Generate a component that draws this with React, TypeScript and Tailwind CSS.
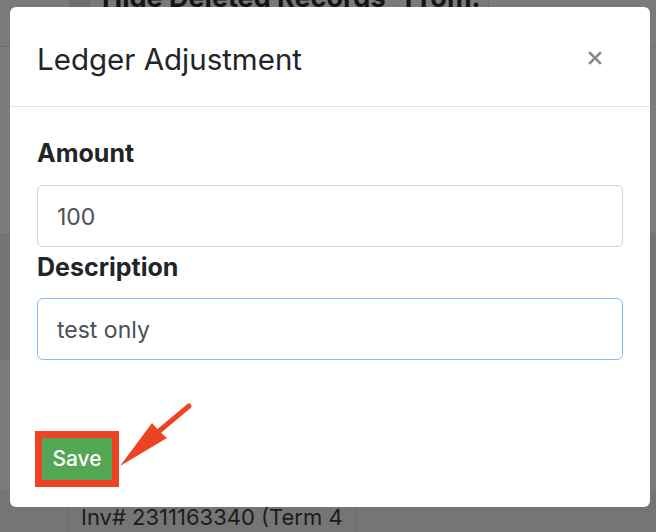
import React from "react";

const font = { fontFamily: "Inter, 'Liberation Sans', sans-serif" };

function Backdrop() {
  return (
    <div className="flex flex-col w-full h-full bg-[#7b7b7b]" style={font}>
      {/* table header row, mostly hidden behind the modal */}
      <div className="h-[47px] border-b border-[#6f6f6f] bg-[#7a7a7a] flex overflow-hidden">
        <div className="w-[69px] shrink-0" />
        <div className="w-[21px] shrink-0 bg-[#6e6e6e]" />
        <div className="flex-1 relative">
          <span className="absolute left-[12px] top-[-22px] text-[27px] font-bold text-[#151515] whitespace-nowrap">
            Hide Deleted Records&nbsp;&nbsp;&nbsp;From:
          </span>
        </div>
        <div className="w-[168px] shrink-0 border-l border-[#6c6c6c]" />
      </div>
      <div className="h-[58px] bg-[#7b7b7b]" />
      <div className="h-[128px] bg-[#7c7c7c]" />
      <div className="h-[127px] bg-[#747474]" />
      <div className="h-[130px] bg-[#7b7b7b]" />
      <div className="flex-1 bg-[#757575] flex">
        <div className="w-[67px] shrink-0" />
        <div className="w-[290px] shrink-0 border-l border-r border-[#6c6c6c] pl-[13px] pt-[16px]">
          <span className="block text-[22px] text-[#1c1c1c] whitespace-nowrap leading-none">
            Inv# 2311163340 (Term 4
          </span>
        </div>
      </div>
    </div>
  );
}

function Field({ label, value, focused, gap }: { label: string; value: string; focused?: boolean; gap: string }) {
  return (
    <div className="flex flex-col">
      <label className="text-[25px] font-bold text-[#212529] leading-[36px]">{label}</label>
      <div
        className={
          gap +
          " h-[62px] w-[586px] rounded-[6px] border bg-white flex items-center px-[19px] pt-[2px] text-[23px] text-[#495057] " +
          (focused ? "border-[#86b7fe]" : "border-[#d4d4d4]")
        }
      >
        {value}
      </div>
    </div>
  );
}

export default function App() {
  return (
    <div className="relative w-[656px] h-[532px] overflow-hidden" style={font}>
      <Backdrop />

      {/* modal */}
      <div className="absolute left-[10px] top-[7px] w-[640px] h-[500px] bg-white rounded-[6px] flex flex-col">
        <div className="h-[100px] border-b border-[#e3e3e3] flex items-center justify-between pl-[27px] pr-[48px]">
          <h2 className="text-[29.5px] text-[#212529] font-normal mt-[5px]">Ledger Adjustment</h2>
          <svg width="14" height="14" viewBox="0 0 14 14" className="mt-[2px]">
            <path d="M2 2 L12 12 M12 2 L2 12" stroke="#8a8a8a" strokeWidth="2.6" strokeLinecap="square" />
          </svg>
        </div>

        <div className="flex flex-col pl-[27px] pt-[28px]">
          <Field label="Amount" value="100" gap="mt-[14px]" />
          <div className="h-[2px]" />
          <Field label="Description" value="test only" focused gap="mt-[13px]" />
        </div>

        <div className="pl-[25px] mt-[71px] relative">
          <div className="inline-flex border-[7px] border-[#ec4325]">
            <button className="w-[70px] h-[42px] bg-[#53a653] text-white text-[21px] font-medium flex items-center justify-center">
              Save
            </button>
          </div>
        </div>
      </div>

      {/* annotation arrow */}
      <svg className="absolute left-0 top-0 pointer-events-none" width="656" height="532">
        <line x1="189" y1="406" x2="158" y2="432" stroke="#ec4325" strokeWidth="5" strokeLinecap="round" />
        <polygon points="120,466 152,423 159,431 167,438" fill="#ec4325" />
      </svg>
    </div>
  );
}
